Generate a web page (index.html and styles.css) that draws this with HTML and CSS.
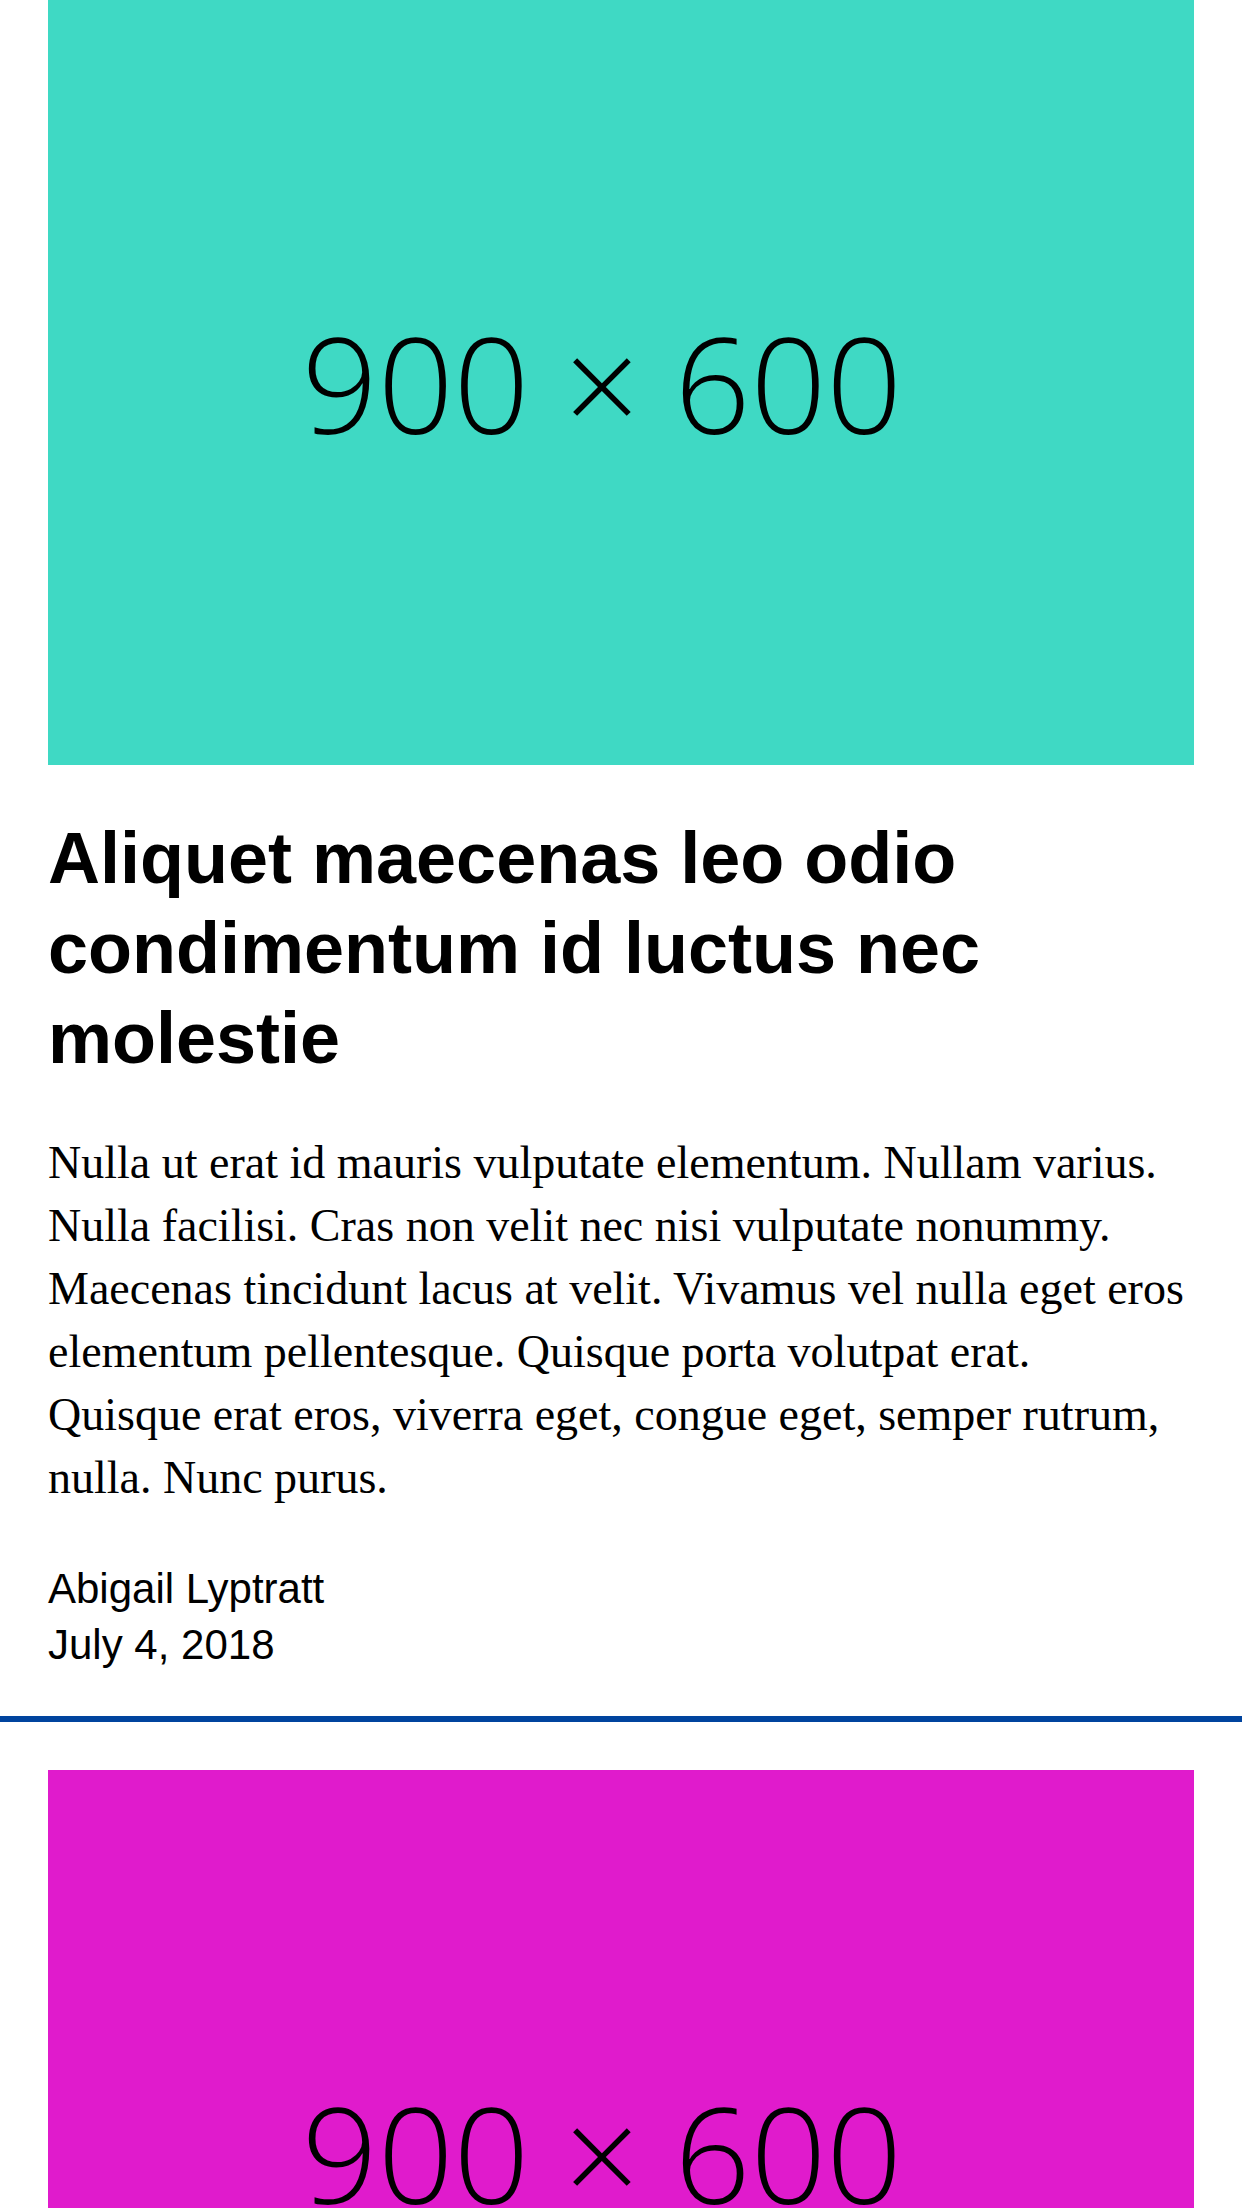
FILE: index.html
```html
<!DOCTYPE html>
<html lang="en">
<head>
<meta charset="utf-8">
<title>Articles</title>
<link rel="stylesheet" href="styles.css">
</head>
<body>
<main class="feed">
  <article class="post">
    <div class="thumb thumb-teal"><span class="thumb-label">900 × 600</span></div>
    <h2 class="post-title">Aliquet maecenas leo odio condimentum id luctus nec molestie</h2>
    <p class="post-body">Nulla ut erat id mauris vulputate elementum. Nullam varius. Nulla facilisi. Cras non velit nec nisi vulputate nonummy. Maecenas tincidunt lacus at velit. Vivamus vel nulla eget eros elementum pellentesque. Quisque porta volutpat erat. Quisque erat eros, viverra eget, congue eget, semper rutrum, nulla. Nunc purus.</p>
    <div class="post-meta">
      <div class="post-author">Abigail Lyptratt</div>
      <div class="post-date">July 4, 2018</div>
    </div>
  </article>
  <article class="post">
    <div class="thumb thumb-magenta"><span class="thumb-label">900 × 600</span></div>
  </article>
</main>
</body>
</html>
```
FILE: styles.css
```css
html, body {
  margin: 0;
  padding: 0;
  background: #ffffff;
}

body {
  color: #000000;
  font-family: "Liberation Sans", Arial, sans-serif;
}

.feed {
  display: flex;
  flex-direction: column;
}

.post {
  padding: 0 48px 43px;
  border-bottom: 6px solid #00449e;
}

.post + .post {
  padding-top: 48px;
}

.thumb {
  height: 765px;
  display: flex;
  align-items: center;
  justify-content: center;
  padding-right: 38px;
  box-sizing: border-box;
}

.thumb-teal {
  background: #3fd9c4;
}

.thumb-magenta {
  background: #e01bcc;
}

.thumb-label {
  font-family: "Open Sans", sans-serif;
  font-weight: 300;
  font-size: 133px;
  line-height: 1;
  color: #000000;
  white-space: nowrap;
}

.post-title {
  margin: 48px 0 0;
  font-family: "Liberation Sans", Arial, sans-serif;
  font-weight: 700;
  font-size: 72px;
  line-height: 90px;
}

.post-body {
  margin: 48px 0 0;
  max-width: 1143px;
  font-family: "Liberation Serif", "Times New Roman", serif;
  font-size: 46px;
  line-height: 63px;
}

.post-meta {
  margin-top: 52px;
  font-family: "Liberation Sans", Arial, sans-serif;
  font-size: 42px;
  line-height: 56px;
}
```
